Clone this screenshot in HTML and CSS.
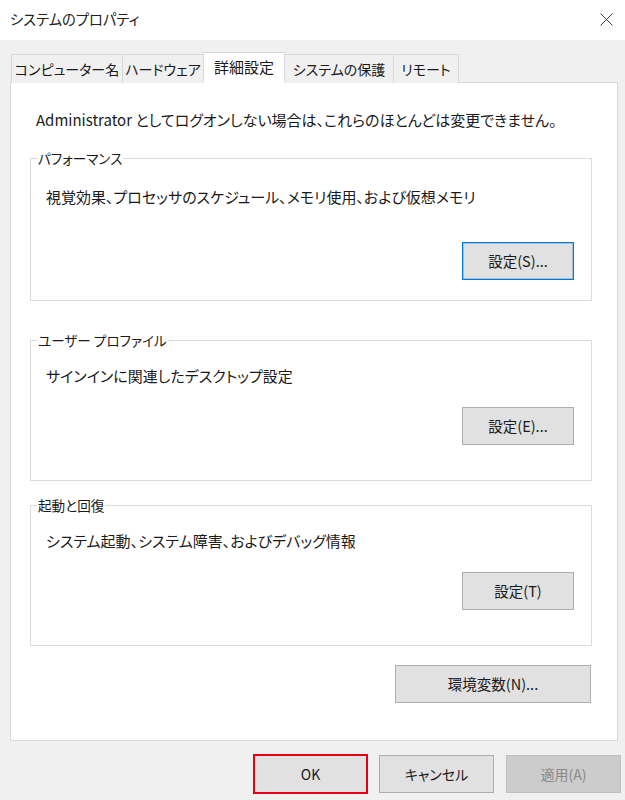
FILE: index.html
```html
<!DOCTYPE html>
<html lang="ja">
<head>
<meta charset="utf-8">
<title>システムのプロパティ</title>
<link rel="stylesheet" href="styles.css">
</head>
<body>
<div class="window">
  <div class="titlebar">
    <span class="title">システムのプロパティ</span>
    <svg class="close" width="13" height="13" viewBox="0 0 13 13"><path d="M0.5 0.5 L12.5 12.5 M12.5 0.5 L0.5 12.5" stroke="#404040" stroke-width="1" fill="none"/></svg>
  </div>
  <div class="body">
    <div class="tabs">
      <div class="tab tab-1">コンピューター名</div>
      <div class="tab tab-2">ハードウェア</div>
      <div class="tab tab-3 active">詳細設定</div>
      <div class="tab tab-4">システムの保護</div>
      <div class="tab tab-5">リモート</div>
    </div>
    <div class="panel">
      <p class="note">Administrator としてログオンしない場合は、これらのほとんどは変更できません。</p>
      <div class="group group-perf">
        <span class="legend">パフォーマンス</span>
        <p class="desc">視覚効果、プロセッサのスケジュール、メモリ使用、および仮想メモリ</p>
        <div class="actions"><button class="btn btn-set focused">設定(S)...</button></div>
      </div>
      <div class="group group-profile">
        <span class="legend">ユーザー プロファイル</span>
        <p class="desc">サインインに関連したデスクトップ設定</p>
        <div class="actions"><button class="btn btn-set">設定(E)...</button></div>
      </div>
      <div class="group group-start">
        <span class="legend">起動と回復</span>
        <p class="desc">システム起動、システム障害、およびデバッグ情報</p>
        <div class="actions"><button class="btn btn-set">設定(T)</button></div>
      </div>
      <div class="env-row"><button class="btn btn-env">環境変数(N)...</button></div>
    </div>
    <div class="footer">
      <button class="btn btn-foot btn-ok">OK</button>
      <button class="btn btn-foot">キャンセル</button>
      <button class="btn btn-foot disabled">適用(A)</button>
    </div>
  </div>
</div>
</body>
</html>
```
FILE: styles.css
```css
* { box-sizing: border-box; }
html, body {
  margin: 0;
  padding: 0;
}
body {
  width: 625px;
  height: 800px;
  overflow: hidden;
  background: #f0f0f0;
  font-family: "Noto Sans CJK JP", "Noto Sans", sans-serif;
  font-size: 14px;
  font-feature-settings: "palt";
  color: #1a1a1a;
}
.window {
  width: 625px;
  height: 800px;
  display: flex;
  flex-direction: column;
}
.titlebar {
  height: 40px;
  background: #ffffff;
  display: flex;
  align-items: center;
  justify-content: space-between;
  padding: 0 12px 2px 10px;
}
.title {
  font-size: 14.3px;
  line-height: 18px;
  color: #222222;
}
.close { display: block; margin-top: 1px; }
.body {
  flex: 1;
  background: #f0f0f0;
  padding: 12px 0 0 10px;
}
.tabs {
  display: flex;
  align-items: flex-end;
  height: 31px;
  padding-left: 1px;
  position: relative;
  z-index: 1;
  margin-bottom: -1px;
}
.tab {
  height: 29px;
  border: 1px solid #d9d9d9;
  border-bottom: none;
  background: #f0f0f0;
  margin-left: -1px;
  display: flex;
  align-items: center;
  justify-content: center;
  white-space: nowrap;
  font-size: 14px;
  line-height: 18px;
  padding-bottom: 1px;
  color: #1a1a1a;
}
.tab-1 { width: 112px; margin-left: 0; }
.tab-2 { width: 82px; }
.tab-3 { width: 82px; font-size: 15px; }
.tab-4 { width: 110px; }
.tab-5 { width: 66px; }
.tab.active {
  height: 31px;
  background: #ffffff;
  padding-bottom: 3px;
}
.panel {
  width: 608px;
  height: 659px;
  background: #ffffff;
  border: 1px solid #d9d9d9;
  padding: 28px 25px 0 19px;
}
.note {
  margin: 0 0 29px 6px;
  font-size: 15px;
  line-height: 18px;
  white-space: nowrap;
}
.group {
  position: relative;
  border: 1px solid #dcdcdc;
  padding: 26px 17px 0 15px;
}
.group-perf { height: 143px; padding-top: 29px; }
.group-profile { height: 141px; margin-top: 39px; }
.group-start { height: 141px; margin-top: 24px; }
.legend {
  position: absolute;
  top: -10px;
  left: 6px;
  padding: 0 1px;
  background: #ffffff;
  font-size: 13.6px;
  line-height: 18px;
  white-space: nowrap;
}
.desc {
  margin: 0;
  font-size: 15px;
  line-height: 18px;
  white-space: nowrap;
}
.actions {
  display: flex;
  justify-content: flex-end;
  margin-top: 22px;
}
.group-perf .actions { margin-top: 36px; }
.btn {
  font-family: inherit;
  font-feature-settings: "palt";
  font-size: 14.5px;
  color: #1a1a1a;
  background: #e1e1e1;
  border: 1px solid #adadad;
  border-radius: 0;
  padding: 0;
  height: 38px;
  line-height: 18px;
  white-space: nowrap;
}
.btn-set { width: 112px; }
.btn.focused {
  border-color: #0078d7;
  box-shadow: inset 0 0 0 1px rgba(0, 120, 215, 0.3);
}
.env-row {
  display: flex;
  justify-content: flex-end;
  margin-top: 19px;
  padding-right: 1px;
}
.btn-env { width: 196px; }
.footer {
  display: flex;
  justify-content: flex-end;
  align-items: center;
  gap: 11px;
  height: 40px;
  margin-top: 13px;
  padding-right: 4px;
}
.btn-foot { width: 115px; font-size: 14px; }
.btn-ok {
  height: 40px;
  border: 2px solid #e60012;
}
.footer .disabled {
  margin-left: 1px;
  background: #cccccc;
  border-color: #bfbfbf;
  color: #8a8a8a;
}
```
